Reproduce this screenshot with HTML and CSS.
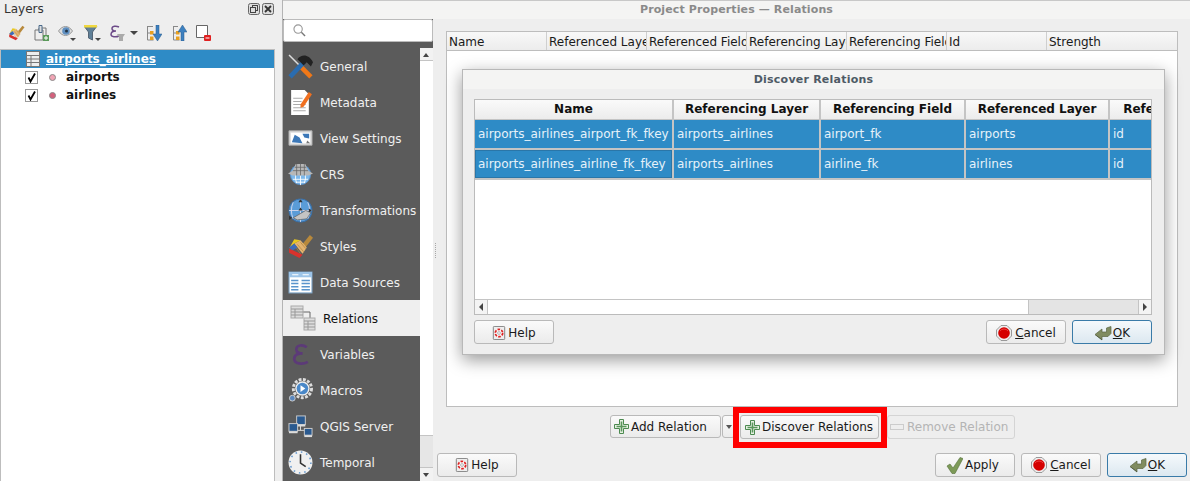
FILE: index.html
```html
<!DOCTYPE html>
<html lang="en">
<head>
    <meta charset="UTF-8">
    <title>Project Properties — Relations</title>
    <link rel="stylesheet" href="styles.css">
</head>
<body>

    <!-- shared icons -->
    <svg class="sprite" width="0" height="0">
        <symbol id="i-help" viewBox="0 0 14 16">
            <rect x=".5" y=".5" width="13" height="15" rx="1" fill="#eee" stroke="#777"/>
            <circle cx="7" cy="8" r="4.200" fill="#fff" stroke="#d22" stroke-width="2" stroke-dasharray="3 1.400"/>
            <circle cx="7" cy="8" r="1.800" fill="#e4e4e4" stroke="#999" stroke-width=".6"/>
        </symbol>
        <symbol id="i-cancel" viewBox="0 0 16 16">
            <path d="M5 .5h6L15.500 5v6L11 15.500H5L.5 11V5z" fill="#eee" stroke="#999"/>
            <circle cx="8" cy="8" r="5.800" fill="#d50000"/>
            <path d="M4 6a5 5 0 0 1 8 0" fill="none" stroke="#ec4040"/>
        </symbol>
        <symbol id="i-ok" viewBox="0 0 18 16">
            <path d="M17 1.500v7l-3 3H8V15L1 9.500 8 4v3h4.500V3z" fill="#808c60" stroke="#5c6644" stroke-width=".7"/>
            <path d="M2 10l6 4.500V15L1 9.800z" fill="#3c4430"/>
        </symbol>
        <symbol id="i-plus" viewBox="0 0 15 15">
            <path d="M5.500.5h4v5h5v4h-5v5h-4v-5h-5v-4h5z" fill="#e6f0e2" stroke="#4c8a50"/>
            <path d="M7.500 2.500v10M2.500 7.500h10" stroke="#5a965c" stroke-width="1.600"/>
        </symbol>
        <symbol id="i-brush" viewBox="0 0 24 24">
            <path d="M12 12L21 1l3 2.500L15 15z" fill="#b8893c"/>
            <path d="M6 9l6-3 6 7-4 6z" fill="#e4b470"/>
            <path d="M9 10l6 7M12 8l5 6M7 12l5 7" stroke="#b08440" stroke-width=".7"/>
            <path d="M6 5l6 1-6 3-5 5z" fill="#e8c820"/>
            <path d="M1 13l5-4 3 4-5 3z" fill="#3f6cb8"/>
            <path d="M1 14l13 6-3 3-10-5z" fill="#d8322c"/>
        </symbol>
        <symbol id="i-epsilon" viewBox="0 0 24 24">
            <path d="M18 5C14 2 8 3 8 7c0 3 3 4 6 4-4 0-8 1-8 5 0 5 8 6 13 3" fill="none" stroke="#5c3a78" stroke-width="2.600"/>
        </symbol>
    </svg>

    <!-- layers dock -->
    <section class="layers">
        <header class="dock-title">
            <span>Layers</span>
            <span class="dock-btns">
                <svg class="dock-btn" viewBox="0 0 12 12"><rect x=".5" y=".5" width="11" height="11" rx="2" fill="#ddd" stroke="#666"/><rect x="4.500" y="2.500" width="5" height="5" fill="none" stroke="#444"/><rect x="2.500" y="4.500" width="5" height="5" fill="#ddd" stroke="#444"/></svg>
                <svg class="dock-btn" viewBox="0 0 12 12"><rect x=".5" y=".5" width="11" height="11" rx="2" fill="#ddd" stroke="#666"/><path d="M3 3l6 6M9 3l-6 6" stroke="#333" stroke-width="1.800"/></svg>
            </span>
        </header>
        <div class="toolbar">
            <svg class="tool tool-brush"><use href="#i-brush"/></svg>
            <svg class="tool tool-add" viewBox="0 0 15 16">
                <path d="M5 3h7v8H5z" fill="#eee" stroke="#777"/><path d="M1 5h8v10H1z" fill="#eee" stroke="#777"/>
                <path d="M5 .5h3v7H5z" fill="#ddd" stroke="#4a6a8a"/><rect x="9" y="10" width="6" height="6" fill="#5a9a5a"/><path d="M12 11v4M10 13h4" stroke="#fff"/>
            </svg>
            <svg class="tool tool-eye" viewBox="0 0 18 16">
                <path d="M.5 6c4-6 10-6 14 0-4 6-10 6-14 0z" fill="#ddd" stroke="#999"/>
                <circle cx="8" cy="6" r="3.800" fill="#5f8fc0"/><circle cx="8.500" cy="6" r="1.500" fill="#234"/>
                <path d="M12 13h6l-3 3z" fill="#444"/>
            </svg>
            <svg class="tool tool-filter" viewBox="0 0 17 16">
                <path d="M0 1h13L8.500 7v8l-4-2V7z" fill="#5f8098" stroke="#567"/><path d="M0 0h13v2.500H0z" fill="#f0d840"/>
                <path d="M11 13h6l-3 3z" fill="#444"/>
            </svg>
            <svg class="tool tool-eps" viewBox="0 0 15 16">
                <path d="M9 2C6 .5 2 1 2 3.500S4.500 6 6 6C3.500 6 1 7 1 9.500s5 3 8 1.500" fill="none" stroke="#6c4a88" stroke-width="1.500"/>
                <path d="M7 9h8l-2 3v4h-4v-4z" fill="#aaa"/>
            </svg>
            <span class="tool-arrow"></span>
            <svg class="tool tool-tree" viewBox="0 0 16 16">
                <path d="M1 1.500h6M1.500 1v14h6M1 8h6" fill="none" stroke="#888"/><rect x="4" y="6" width="3.500" height="3.500" fill="#e8a020"/><rect x="4" y="11.500" width="3.500" height="3.500" fill="#e8a020"/>
                <path d="M10 0h3v9h3l-4.500 7L7 9h3z" fill="#3c80c0" stroke="#2a5a88" stroke-width=".5"/>
            </svg>
            <svg class="tool tool-tree2" viewBox="0 0 15 16">
                <path d="M1 1.500h5M1.500 1v14h6M1 8h6" fill="none" stroke="#888"/><rect x="4" y="6" width="3.500" height="3.500" fill="#e8a020"/><rect x="4" y="11.500" width="3.500" height="3.500" fill="#e8a020"/>
                <path d="M9 16h3V7h3L10.500 0 6 7h3z" fill="#3c80c0" stroke="#2a5a88" stroke-width=".5"/>
            </svg>
            <svg class="tool tool-remove" viewBox="0 0 15 16">
                <path d="M.5.500h11v12H.5z" fill="#fff" stroke="#666"/><rect x="8" y="10" width="7" height="6" rx="1" fill="#e02020"/><path d="M9.500 13h4" stroke="#fff"/>
            </svg>
        </div>
        <ul class="tree">
            <li class="tree-row tree-row-selected">
                <svg class="tree-table" viewBox="0 0 14 16"><rect x=".5" y=".5" width="13" height="15" fill="#eee" stroke="#777"/><path d="M1 4.500h12M1 8h12M1 11.500h12M5 4.500v11" stroke="#777"/></svg>
                <span class="tree-group">airports_airlines</span>
            </li>
            <li class="tree-row">
                <span class="check"><svg class="check-mark" viewBox="0 0 11 11"><path d="M2.500 5.500L4.500 9.500 9 1.500" fill="none" stroke="#000" stroke-width="1.800"/></svg></span><span class="dot dot-light"></span><b>airports</b>
            </li>
            <li class="tree-row">
                <span class="check"><svg class="check-mark" viewBox="0 0 11 11"><path d="M2.500 5.500L4.500 9.500 9 1.500" fill="none" stroke="#000" stroke-width="1.800"/></svg></span><span class="dot"></span><b>airlines</b>
            </li>
        </ul>
    </section>

    <!-- project properties window -->
    <section class="window">
        <header class="window-title">Project Properties — Relations</header>
        <div class="window-body">

            <aside class="sidebar">
                <div class="search">
                    <svg class="search-icon" viewBox="0 0 14 14"><circle cx="5.500" cy="5.500" r="4.500" fill="none" stroke="#999" stroke-width="1.200"/><path d="M9 9l4 4" stroke="#777" stroke-width="1.500"/></svg>
                </div>
                <div class="menu-wrap">
                    <ul class="menu">
                        <li class="menu-item">
                            <svg class="menu-icon" viewBox="0 0 24 24">
                                <path d="M1 1l12 12" stroke="#ddd" stroke-width="1.500"/><path d="M11 11l11 11" stroke="#f07818" stroke-width="4.500"/>
                                <path d="M2 22L15 8" stroke="#2a6cb0" stroke-width="4.500"/>
                                <path d="M9 5c4-5 11-5 15 3l-2 4-4-4-3 3-3-3z" fill="#222"/>
                            </svg>
                            General
                        </li>
                        <li class="menu-item">
                            <svg class="menu-icon" viewBox="0 0 24 24">
                                <path d="M3 0h13l4 4v20H3z" fill="#fff"/>
                                <path d="M5 8h9M5 11h8M5 14h12M5 17h12M5 20h12" stroke="#aaa"/>
                                <path d="M20 2l3 2-8 12-3 1 0-3z" fill="#f07020"/>
                            </svg>
                            Metadata
                        </li>
                        <li class="menu-item">
                            <svg class="menu-icon" viewBox="0 0 26 24">
                                <path d="M1 4h24v15H1z" fill="#ddd" stroke="#aaa"/><path d="M3 6h20v11H3z" fill="#fff"/>
                                <path d="M4 16l3-8 5 3 3 6zM15 7h7v5l-5-1z" fill="#3c78b8"/><path d="M20 14l3 3h-4z" fill="#777"/>
                            </svg>
                            View Settings
                        </li>
                        <li class="menu-item">
                            <svg class="menu-icon" viewBox="0 0 26 24">
                                <circle cx="13" cy="12" r="10.500" fill="#7cb8ec" stroke="#5a90c8"/>
                                <path d="M13 2v21M5 17h16M8 20h10M8 12a15 15 0 0 0 1 9M18 12a15 15 0 0 1-1 9" fill="none" stroke="#fff" stroke-width=".9"/>
                                <path d="M0 11l5-3 3-7h10l3 7 5 3-5 2H5z" fill="#b8b8b8"/>
                                <path d="M5 8h16M7 4.500h12M9 1v12M13 1v12M17 1v12" stroke="#666" stroke-width=".8"/>
                            </svg>
                            CRS
                        </li>
                        <li class="menu-item">
                            <svg class="menu-icon" viewBox="0 0 24 24">
                                <circle cx="12" cy="12" r="11" fill="#5a9cd8" stroke="#3a70a8"/>
                                <path d="M12 1v22M1 12h22M5 4a20 20 0 0 0 0 16M19 4a20 20 0 0 1 0 16" fill="none" stroke="#dde" stroke-width=".8"/>
                                <path d="M5 19l12-7 5 2-4 6-9 1z" fill="#c4c4c4" stroke="#555" stroke-width=".6"/>
                                <path d="M12 1l-2 3h4zM23 12l-3-2v4zM1 17l3 2-3 2zM12 9l-2 3h4z" fill="#333"/>
                            </svg>
                            Transformations
                        </li>
                        <li class="menu-item">
                            <svg class="menu-icon"><use href="#i-brush"/></svg>
                            Styles
                        </li>
                        <li class="menu-item">
                            <svg class="menu-icon" viewBox="0 0 24 24">
                                <rect x="1" y="2" width="22" height="20" fill="#fff" stroke="#7fa8cc"/>
                                <path d="M1 2h22v5H1z" fill="#9cc4e8"/><path d="M4 4.500h6M14 4.500h6" stroke="#fff"/>
                                <path d="M3 10h7M3 13h7M3 16h7M3 19h7M13 10h8M13 13h8M13 16h8M13 19h8" stroke="#5a94cc" stroke-width="1.500"/>
                            </svg>
                            Data Sources
                        </li>
                        <li class="menu-item menu-item-active">
                            <svg class="menu-icon menu-icon-wide" viewBox="0 0 26 26">
                                <path d="M12 7h8v8" fill="none" stroke="#666"/>
                                <rect x="1" y="1" width="12" height="12" fill="#ddd" stroke="#aaa"/><path d="M1 4h12M1 7h12M1 10h12M5 4v9" stroke="#999"/>
                                <rect x="14" y="13" width="11" height="12" fill="#ddd" stroke="#aaa"/><path d="M14 16h11M14 19h11M14 22h11M18 16v9" stroke="#999"/>
                            </svg>
                            Relations
                        </li>
                        <li class="menu-item">
                            <svg class="menu-icon"><use href="#i-epsilon"/></svg>
                            Variables
                        </li>
                        <li class="menu-item">
                            <svg class="menu-icon" viewBox="0 0 26 24">
                                <circle cx="4.500" cy="20" r="3" fill="#5a88c0" stroke="#ccc"/>
                                <circle cx="15" cy="10" r="9.500" fill="none" stroke="#ddd" stroke-width="3" stroke-dasharray="3 1.500"/>
                                <circle cx="15" cy="10" r="7.500" fill="#eee"/>
                                <circle cx="15" cy="10" r="6" fill="#4a88c8"/><path d="M13 6.500l5 3.500-5 3.500z" fill="#fff"/>
                            </svg>
                            Macros
                        </li>
                        <li class="menu-item">
                            <svg class="menu-icon" viewBox="0 0 26 24">
                                <path d="M13 11v5M6 16h14" stroke="#ddd"/>
                                <rect x="9" y="1" width="9" height="9" fill="#2a5a90" stroke="#ccc"/><rect x="9" y="10" width="9" height="2" fill="#ddd"/>
                                <rect x="1" y="9" width="9" height="8" fill="#2a5a90" stroke="#ccc"/><rect x="1" y="17" width="9" height="2" fill="#ddd"/>
                                <rect x="17" y="14" width="8" height="7" fill="#2a5a90" stroke="#ccc"/><rect x="17" y="21" width="8" height="2" fill="#ddd"/>
                            </svg>
                            QGIS Server
                        </li>
                        <li class="menu-item">
                            <svg class="menu-icon" viewBox="0 0 24 24">
                                <circle cx="12" cy="12" r="11.500" fill="#f0f0f0"/>
                                <circle cx="12" cy="12" r="10" fill="none" stroke="#6a9cd0" stroke-width="1.500" stroke-dasharray="1.500 3.740"/>
                                <path d="M12 4v8.500l5 3.500" fill="none" stroke="#333" stroke-width="1.500"/>
                            </svg>
                            Temporal
                        </li>
                    </ul>
                    <div class="side-scroll">
                        <span class="side-arrow side-arrow-up"></span>
                        <span class="side-track"></span>
                        <span class="side-thumb"></span>
                        <span class="side-arrow side-arrow-down"></span>
                    </div>
                </div>
            </aside>

            <main class="content">
                <span class="splitter"></span>
                <div class="relations-panel">
                    <div class="relations-head">
                        <span>Name</span>
                        <span>Referenced Layer</span>
                        <span>Referenced Field</span>
                        <span>Referencing Layer</span>
                        <span>Referencing Field</span>
                        <span>Id</span>
                        <span class="relations-last">Strength</span>
                    </div>
                </div>

                <div class="btn-row">
                    <button class="btn btn-add"><svg class="btn-icon"><use href="#i-plus"/></svg>Add Relation</button>
                    <button class="btn btn-drop"><span class="drop-arrow"></span></button>
                    <div class="discover-wrap">
                        <button class="btn btn-discover"><svg class="btn-icon"><use href="#i-plus"/></svg>Discover Relations</button>
                        <span class="highlight"></span>
                    </div>
                    <button class="btn btn-remove"><svg class="btn-icon btn-icon-minus" viewBox="0 0 14 8"><rect x=".5" y="1.500" width="13" height="5" fill="#eee" stroke="#ccc"/></svg>Remove Relation</button>
                </div>

                <footer class="dialog-btns">
                    <button class="btn btn-std btn-help"><svg class="btn-icon"><use href="#i-help"/></svg>Help</button>
                    <span class="spacer"></span>
                    <button class="btn btn-std btn-apply">
                        <svg class="btn-icon btn-icon-big" viewBox="0 0 17 17"><path d="M1 9l3-2 3 4L14 .5l3 1L9 16.500H6z" fill="#7d9a58" stroke="#55703a" stroke-width=".6"/></svg>Apply
                    </button>
                    <button class="btn btn-std"><svg class="btn-icon btn-icon-cancel"><use href="#i-cancel"/></svg><span><u>C</u>ancel</span></button>
                    <button class="btn btn-std btn-default"><svg class="btn-icon btn-icon-ok"><use href="#i-ok"/></svg><span><u>O</u>K</span></button>
                </footer>

                <!-- modal lying over the relations panel -->
                <div class="dialog">
                    <header class="dialog-title">Discover Relations</header>
                    <div class="dialog-body">
                        <div class="grid-box">
                            <table class="grid">
                                <thead>
                                    <tr>
                                        <th class="col-name">Name</th>
                                        <th class="col-layer">Referencing Layer</th>
                                        <th class="col-field">Referencing Field</th>
                                        <th class="col-ref">Referenced Layer</th>
                                        <th class="col-last">Referenced Field</th>
                                    </tr>
                                </thead>
                                <tbody>
                                    <tr>
                                        <td>airports_airlines_airport_fk_fkey</td>
                                        <td>airports_airlines</td>
                                        <td>airport_fk</td>
                                        <td>airports</td>
                                        <td>id</td>
                                    </tr>
                                    <tr>
                                        <td class="cell-current">airports_airlines_airline_fk_fkey</td>
                                        <td>airports_airlines</td>
                                        <td>airline_fk</td>
                                        <td>airlines</td>
                                        <td>id</td>
                                    </tr>
                                </tbody>
                            </table>
                            <div class="grid-fill"></div>
                            <div class="hscroll">
                                <span class="hscroll-btn"><span class="arrow-left"></span></span>
                                <span class="hscroll-thumb"></span>
                                <span class="hscroll-track"></span>
                                <span class="hscroll-btn hscroll-btn-right"><span class="arrow-right"></span></span>
                            </div>
                        </div>
                        <div class="dialog-btns dialog-btns-inner">
                            <button class="btn btn-std btn-help"><svg class="btn-icon"><use href="#i-help"/></svg>Help</button>
                            <span class="spacer"></span>
                            <button class="btn btn-std"><svg class="btn-icon btn-icon-cancel"><use href="#i-cancel"/></svg><span><u>C</u>ancel</span></button>
                            <button class="btn btn-std btn-default"><svg class="btn-icon btn-icon-ok"><use href="#i-ok"/></svg><span><u>O</u>K</span></button>
                        </div>
                    </div>
                </div>
            </main>
        </div>
    </section>

</body>
</html>
```

FILE: styles.css
```css
* {
    box-sizing: border-box;
}

body {
    margin: 0;
    width: 1190px;
    height: 481px;
    overflow: hidden;
    display: flex;
    background: #eeeeee;
    font-family: "DejaVu Sans", sans-serif;
    font-size: 12px;
    color: #1a1a1a;
}

.sprite {
    position: absolute;
}

ul {
    list-style: none;
    margin: 0;
    padding: 0;
}

/* layers dock */
.layers {
    width: 275px;
    flex: none;
    display: flex;
    flex-direction: column;
}

.dock-title {
    height: 18px;
    padding: 0 1px 0 4px;
    display: flex;
    justify-content: space-between;
    align-items: center;
    line-height: 16px;
    color: #333;
}

.dock-btns {
    display: flex;
    gap: 2px;
}

.dock-btn {
    width: 12px;
    height: 12px;
}

.toolbar {
    height: 31px;
    display: flex;
    align-items: center;
    padding: 0 0 2px 8px;
}

.tool {
    flex: none;
    height: 16px;
}

.tool-brush {
    width: 17px;
    margin-right: 9px;
}

.tool-add {
    width: 15px;
    margin-right: 9px;
}

.tool-eye {
    width: 18px;
    margin-right: 8px;
}

.tool-filter {
    width: 17px;
    margin-right: 9px;
}

.tool-eps {
    width: 15px;
    margin-right: 5px;
}

.tool-arrow {
    width: 0;
    height: 0;
    margin-right: 8px;
    border-left: 4px solid transparent;
    border-right: 4px solid transparent;
    border-top: 4px solid #444;
}

.tool-tree {
    width: 16px;
    margin-right: 10px;
}

.tool-tree2 {
    width: 15px;
    margin-right: 9px;
}

.tool-remove {
    width: 15px;
}

.tree {
    flex: 1;
    background: #fff;
    border: 1px solid #bdbdbd;
    border-bottom: none;
}

.tree-row {
    height: 18px;
    display: flex;
    align-items: center;
    padding-left: 24px;
    color: #111;
}

.tree-row-selected {
    background: #2e8bc6;
    color: #fff;
}

.tree-table {
    width: 14px;
    height: 16px;
    margin-left: 1px;
    margin-right: 6px;
}

.tree-group {
    font-weight: bold;
    text-decoration: underline;
}

.check {
    width: 13px;
    height: 13px;
    border: 1px solid #9a9a9a;
    background: #fff;
    margin-right: 11px;
}

.check-mark {
    display: block;
    width: 11px;
    height: 11px;
}

.dot {
    width: 7px;
    height: 7px;
    border-radius: 50%;
    background: #d4607c;
    border: 1px solid #8a8a8a;
    margin-right: 10px;
}

.dot-light {
    background: #f0a4b4;
}

/* properties window */
.window {
    margin-left: 7px;
    flex: 1;
    display: flex;
    flex-direction: column;
    border-left: 1px solid #b4b4b4;
    min-width: 0;
}

.window-title {
    height: 19px;
    flex: none;
    background: #f4f4f3;
    border-top: 1px solid #c8c8c8;
    text-align: center;
    font-size: 11px;
    font-weight: bold;
    letter-spacing: 0.12px;
    line-height: 18px;
    color: #8a8a8a;
}

.window-body {
    flex: 1;
    display: flex;
    min-height: 0;
}

.sidebar {
    width: 150px;
    flex: none;
    display: flex;
    flex-direction: column;
    background: #5b5b5b;
}

.search {
    height: 23px;
    flex: none;
    background: #fff;
    border: 1px solid #bbb;
    border-radius: 2px;
    padding: 4px 0 0 9px;
}

.search-icon {
    display: block;
    width: 13px;
    height: 13px;
}

.menu-wrap {
    flex: 1;
    display: flex;
    padding-top: 6px;
    min-height: 0;
}

.menu {
    width: 137px;
    flex: none;
}

.menu-item {
    height: 36px;
    display: flex;
    align-items: center;
    gap: 7px;
    padding: 2px 0 0 5px;
    color: #f0f0f0;
    white-space: nowrap;
}

.menu-item-active {
    background: #efefef;
    color: #111;
}

.menu-icon {
    width: 25px;
    height: 25px;
    flex: none;
    margin-top: -2px;
}

.menu-icon-wide {
    width: 26px;
    height: 26px;
    margin-left: 2px;
}

.side-scroll {
    width: 13px;
    flex: none;
    display: flex;
    flex-direction: column;
    background: #fff;
}

.side-arrow {
    height: 13px;
    flex: none;
    position: relative;
    background: #f2f2f2;
}

.side-arrow::after {
    content: "";
    position: absolute;
    left: 3px;
    top: 5px;
    border-left: 3.500px solid transparent;
    border-right: 3.500px solid transparent;
}

.side-arrow-up {
    border-bottom: 1px solid #c4c4c4;
}

.side-arrow-up::after {
    border-bottom: 4px solid #444;
}

.side-arrow-down::after {
    border-top: 4px solid #444;
}

.side-track {
    flex: 1;
    background: #fff;
}

.side-thumb {
    height: 33px;
    flex: none;
    background: #e6e6e6;
    border-top: 1px solid #c4c4c4;
    border-bottom: 1px solid #c4c4c4;
}

.content {
    flex: 1;
    position: relative;
    min-width: 0;
    display: flex;
    flex-direction: column;
    padding: 12px 3px 0 4px;
}

.splitter {
    position: absolute;
    left: 2px;
    top: 224px;
    height: 15px;
    border-left: 1px dotted #a8a8a8;
}

.relations-panel {
    height: 376px;
    flex: none;
    margin: 0 9px;
    background: #fff;
    border: 1px solid #bdbdbd;
}

.relations-head {
    height: 19px;
    display: flex;
    background: linear-gradient(#f8f8f8, #ececec);
    border-bottom: 1px solid #bdbdbd;
}

.relations-head span {
    width: 100px;
    flex: none;
    overflow: hidden;
    white-space: nowrap;
    padding-left: 2px;
    line-height: 21px;
    border-right: 1px solid #cfcfcf;
}

.relations-head .relations-last {
    flex: 1;
    border-right: none;
}

/* buttons */
.btn {
    height: 24px;
    padding: 0;
    display: flex;
    align-items: center;
    justify-content: center;
    gap: 3px;
    background: linear-gradient(#fafafa, #ebebeb);
    border: 1px solid #b9b9b9;
    border-radius: 3px;
    font-family: "DejaVu Sans", sans-serif;
    font-size: 12px;
    color: #1a1a1a;
    white-space: nowrap;
}

.btn-icon {
    width: 14px;
    height: 14px;
    flex: none;
}

.btn-icon-big {
    width: 17px;
    height: 17px;
}

.btn-icon-cancel {
    width: 16px;
    height: 16px;
}

.btn-icon-ok {
    width: 18px;
    height: 16px;
}

.btn-icon-minus {
    height: 8px;
}

.btn-row {
    height: 24px;
    margin-top: 8px;
    display: flex;
    padding-left: 173px;
}

.btn-add {
    width: 111px;
    height: 23px;
    justify-content: flex-start;
    gap: 2px;
    padding-left: 3px;
}

.btn-add .btn-icon,
.btn-discover .btn-icon {
    width: 15px;
    height: 15px;
}

.btn-drop {
    width: 13px;
    height: 23px;
    margin-left: 1px;
}

.drop-arrow {
    border-left: 3.500px solid transparent;
    border-right: 3.500px solid transparent;
    border-top: 4px solid #555;
}

.discover-wrap {
    position: relative;
    margin-left: 5px;
    margin-right: 8px;
}

.btn-discover {
    width: 139px;
    justify-content: flex-start;
    gap: 2px;
    padding-left: 4px;
}

.highlight {
    position: absolute;
    left: -7px;
    right: -8px;
    top: -8px;
    bottom: -9px;
    border: 6px solid #ff0000;
}

.btn-remove {
    width: 128px;
    justify-content: flex-start;
    padding-left: 2px;
    color: #b4b4b4;
    background: #eeeeee;
    border-color: #d4d4d4;
}

.dialog-btns {
    display: flex;
    gap: 6px;
    margin-top: 14px;
}

.spacer {
    flex: 1;
}

.btn-std {
    width: 80px;
}

.btn-help,
.btn-apply {
    gap: 2px;
}

.btn-apply {
    padding-right: 5px;
}

.btn-default {
    gap: 1px;
    background: linear-gradient(#f5f9fc, #dce8f0);
    border-color: #3a7ba8;
}

/* modal dialog */
.dialog {
    position: absolute;
    left: 29px;
    top: 50px;
    width: 703px;
    height: 286px;
    display: flex;
    flex-direction: column;
    background: #eeeeee;
    border: 1px solid #b8b8b8;
    box-shadow: 0 5px 16px rgba(0, 0, 0, 0.4);
}

.dialog-title {
    height: 19px;
    flex: none;
    background: #f4f4f3;
    text-align: center;
    font-size: 11px;
    font-weight: bold;
    letter-spacing: 0.22px;
    line-height: 19px;
    color: #4e5a66;
}

.dialog-body {
    flex: 1;
    display: flex;
    flex-direction: column;
    padding: 10px 12px 10px 11px;
}

.grid-box {
    height: 216px;
    flex: none;
    display: flex;
    flex-direction: column;
    overflow: hidden;
    background: #fff;
    border: 1px solid #bbb;
}

.grid {
    width: 777px;
    flex: none;
    table-layout: fixed;
    border-collapse: collapse;
}

.grid th {
    height: 19px;
    padding: 0;
    background: linear-gradient(#fafafa, #ececec);
    border-right: 2px solid #c4c4c4;
    border-bottom: 1px solid #c4c4c4;
    font-size: 12px;
    color: #111;
    white-space: nowrap;
}

.grid td {
    height: 30px;
    padding: 0 0 0 3px;
    background: #2e8bc6;
    border-right: 2px solid #c4c4c4;
    border-bottom: 2px solid #c4c4c4;
    color: #e6f2fa;
    white-space: nowrap;
    overflow: hidden;
}

.grid td.cell-current {
    box-shadow: inset 0 0 0 1px #2a76a8;
}

.col-name {
    width: 198px;
}

.col-layer {
    width: 147px;
}

.col-field {
    width: 145px;
}

.col-ref {
    width: 144px;
}

.col-last {
    width: 143px;
}

.grid-fill {
    flex: 1;
}

.hscroll {
    height: 15px;
    flex: none;
    display: flex;
    border-top: 1px solid #c4c4c4;
}

.hscroll-btn {
    width: 13px;
    flex: none;
    display: flex;
    align-items: center;
    justify-content: center;
    background: #f4f4f4;
    border-right: 1px solid #c4c4c4;
}

.hscroll-btn-right {
    border-right: none;
    border-left: 1px solid #c4c4c4;
}

.arrow-left {
    border-top: 4px solid transparent;
    border-bottom: 4px solid transparent;
    border-right: 4px solid #444;
}

.arrow-right {
    border-top: 4px solid transparent;
    border-bottom: 4px solid transparent;
    border-left: 4px solid #444;
}

.hscroll-thumb {
    width: 541px;
    flex: none;
    background: #fff;
    border-right: 1px solid #c4c4c4;
}

.hscroll-track {
    flex: 1;
    background: #e4e4e4;
}

.dialog-btns-inner {
    margin-top: 5px;
}

.dialog-btns-inner .btn {
    padding-top: 2px;
}
```
